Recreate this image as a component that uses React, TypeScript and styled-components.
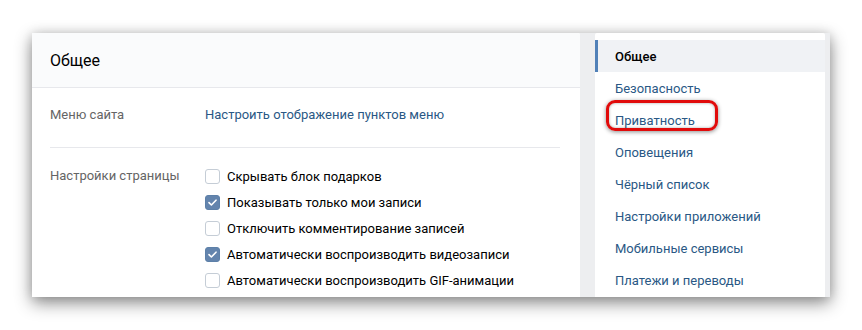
import React from "react";
import styled, { createGlobalStyle } from "styled-components";

const Global = createGlobalStyle`
  html, body { margin: 0; padding: 0; background: #ffffff; }
  body { font-family: Roboto, "Open Sans", "DejaVu Sans", sans-serif; font-size: 13px; -webkit-font-smoothing: antialiased; }
`;

const Stage = styled.div`
  width: 862px;
  height: 330px;
  padding: 33px 0 0 32px;
  box-sizing: border-box;
`;

const Window = styled.div`
  width: 798px;
  height: 264px;
  background: #edeef0;
  display: flex;
  gap: 15px;
  box-shadow: 0 6px 16px rgba(0, 0, 0, 0.45), 0 0 10px rgba(0, 0, 0, 0.12);
  overflow: hidden;
`;

const MainCard = styled.div`
  width: 548px;
  background: #fff;
  border-radius: 0 2px 0 0;
  display: flex;
  flex-direction: column;
  overflow: hidden;
`;

const Header = styled.div`
  flex-shrink: 0;
  height: 55px;
  background: #fafbfc;
  border-bottom: 1px solid #e7e8ec;
  padding: 0 18px;
  display: flex;
  align-items: center;
  font-size: 16px;
  color: #000;
  box-sizing: border-box;
`;

const Body = styled.div`
  flex-shrink: 0;
  padding: 0 20px 0 18px;
`;

const Row = styled.div<{ $top: number; $bottom: number; $divider?: boolean }>`
  display: flex;
  padding: ${(p) => p.$top}px 0 ${(p) => p.$bottom}px;
  border-bottom: ${(p) => (p.$divider ? "1px solid #e7e8ec" : "none")};
`;

const Label = styled.div<{ $lh: number }>`
  width: 155px;
  flex-shrink: 0;
  color: #656565;
  line-height: ${(p) => p.$lh}px;
`;

const Link = styled.div`
  color: #2a5885;
  line-height: 18px;
`;

const Checks = styled.div`
  display: flex;
  flex-direction: column;
`;

const CheckRow = styled.div`
  display: flex;
  align-items: center;
  height: 26px;
  gap: 7px;
  color: #000;
`;

const Box = styled.div<{ $on?: boolean }>`
  width: 15px;
  height: 15px;
  box-sizing: border-box;
  border-radius: 3px;
  border: 1px solid ${(p) => (p.$on ? "#5d80a8" : "#c5cdd6")};
  background: ${(p) => (p.$on ? "#6384ad" : "#fff")};
  display: flex;
  align-items: center;
  justify-content: center;
`;

const SideCard = styled.div`
  width: 230px;
  background: #fff;
  border-radius: 2px 2px 0 0;
  padding-top: 7px;
  box-sizing: border-box;
`;

const MenuItem = styled.div<{ $active?: boolean }>`
  position: relative;
  height: 32px;
  display: flex;
  align-items: center;
  padding-left: 17px;
  border-left: 3px solid ${(p) => (p.$active ? "#5181b8" : "transparent")};
  background: ${(p) => (p.$active ? "#f0f2f5" : "transparent")};
  color: ${(p) => (p.$active ? "#000" : "#2a5885")};
  font-weight: ${(p) => (p.$active ? 500 : 400)};
`;

const Highlight = styled.div`
  position: absolute;
  left: 8px;
  top: -4px;
  width: 112px;
  height: 31px;
  box-sizing: border-box;
  border: 3px solid #e10b0b;
  border-radius: 9px;
  box-shadow: 0 1px 4px rgba(0, 0, 0, 0.45), inset 0 0 3px rgba(0, 0, 0, 0.35);
  pointer-events: none;
`;

const Check = () => (
  <svg width="9" height="7" viewBox="0 0 9 7">
    <path d="M1 3.6 L3.4 6 L8 1.2" fill="none" stroke="#fff" strokeWidth="1.6" strokeLinecap="round" strokeLinejoin="round" />
  </svg>
);

const checks = [
  { t: "Скрывать блок подарков", on: false },
  { t: "Показывать только мои записи", on: true },
  { t: "Отключить комментирование записей", on: false },
  { t: "Автоматически воспроизводить видеозаписи", on: true },
  { t: "Автоматически воспроизводить GIF-анимации", on: false },
];

const menu = [
  "Общее",
  "Безопасность",
  "Приватность",
  "Оповещения",
  "Чёрный список",
  "Настройки приложений",
  "Мобильные сервисы",
  "Платежи и переводы",
];

export default function App() {
  return (
    <>
      <Global />
      <Stage>
        <Window>
          <MainCard>
            <Header>Общее</Header>
            <Body>
              <Row $top={18} $bottom={23} $divider>
                <Label $lh={18}>Меню сайта</Label>
                <Link>Настроить отображение пунктов меню</Link>
              </Row>
              <Row $top={15} $bottom={10}>
                <Label $lh={26}>Настройки страницы</Label>
                <Checks>
                  {checks.map((c) => (
                    <CheckRow key={c.t}>
                      <Box $on={c.on}>{c.on && <Check />}</Box>
                      {c.t}
                    </CheckRow>
                  ))}
                </Checks>
              </Row>
            </Body>
          </MainCard>
          <SideCard>
            {menu.map((m, i) => (
              <MenuItem key={m} $active={i === 0}>
                {m}
                {i === 2 && <Highlight />}
              </MenuItem>
            ))}
          </SideCard>
        </Window>
      </Stage>
    </>
  );
}
